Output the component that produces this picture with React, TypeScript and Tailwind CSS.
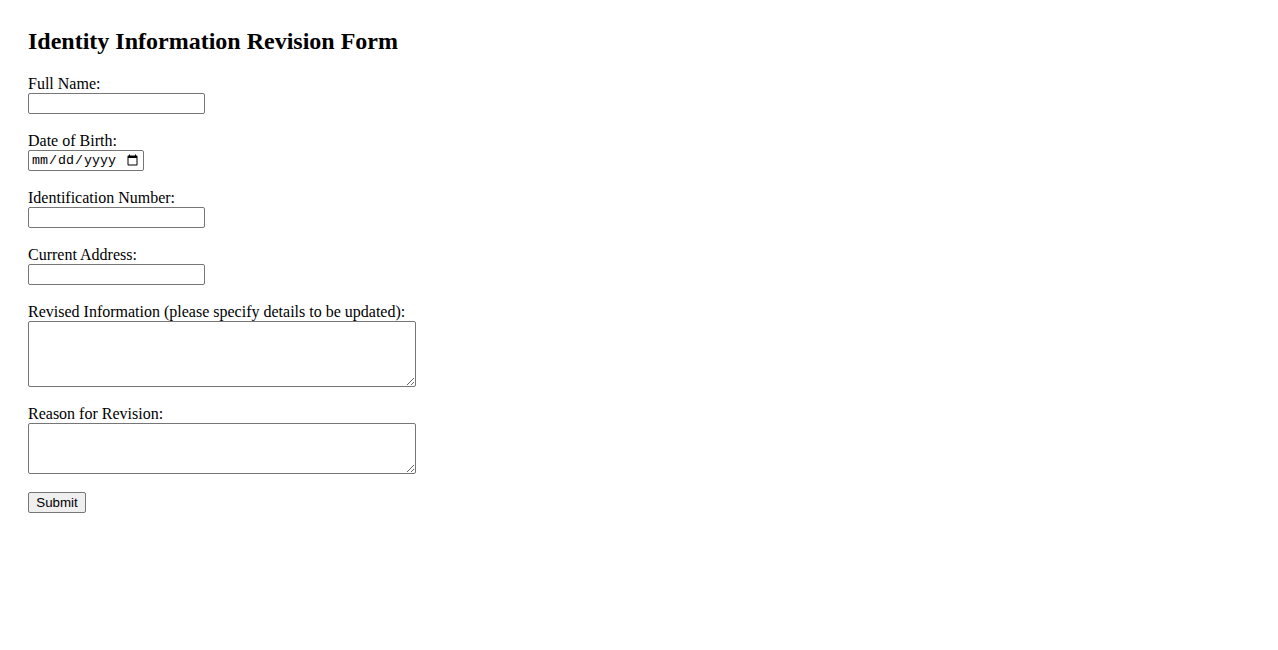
import React from "react";

export default function App() {
  const label = "block h-[18px] leading-[18px] text-[16px] text-black";
  const input =
    "block w-[177px] h-[21px] border border-[#767676] rounded-[2px] bg-white px-[2px] text-[13.33px] font-['Liberation_Sans',Arial,sans-serif]";
  return (
    <div className="min-h-[650px] bg-white pt-[27px] px-[28px] font-['Liberation_Serif','Times_New_Roman',serif] text-black">
      <h2 className="text-[24px] leading-[28px] font-bold mb-[20px]">Identity Information Revision Form</h2>
      <form className="flex flex-col" onSubmit={(e) => e.preventDefault()}>
        <label className={label}>Full Name:</label>
        <input type="text" className={input} />
        <div className="h-[18px]" />
        <label className={label}>Date of Birth:</label>
        <input
          type="date"
          className="block w-[116px] h-[21px] border border-[#767676] rounded-[2px] bg-white pl-[2px] pr-[2px] text-[13.33px] font-['Liberation_Mono','Courier_New',monospace]"
        />
        <div className="h-[18px]" />
        <label className={label}>Identification Number:</label>
        <input type="text" className={input} />
        <div className="h-[18px]" />
        <label className={label}>Current Address:</label>
        <input type="text" className={input} />
        <div className="h-[18px]" />
        <label className={label}>Revised Information (please specify details to be updated):</label>
        <textarea className="block w-[388px] h-[66px] border border-[#767676] rounded-[2px] bg-white p-[2px] text-[13.33px] font-['Liberation_Mono',monospace]" />
        <div className="h-[18px]" />
        <label className={label}>Reason for Revision:</label>
        <textarea className="block w-[388px] h-[51px] border border-[#767676] rounded-[2px] bg-white p-[2px] text-[13.33px] font-['Liberation_Mono',monospace]" />
        <div className="h-[18px]" />
        <button
          type="submit"
          className="block self-start w-[58px] h-[21px] border border-[#767676] rounded-[2px] bg-[#efefef] text-[13.33px] leading-[15px] font-['Liberation_Sans',Arial,sans-serif] text-black"
        >
          Submit
        </button>
      </form>
    </div>
  );
}
